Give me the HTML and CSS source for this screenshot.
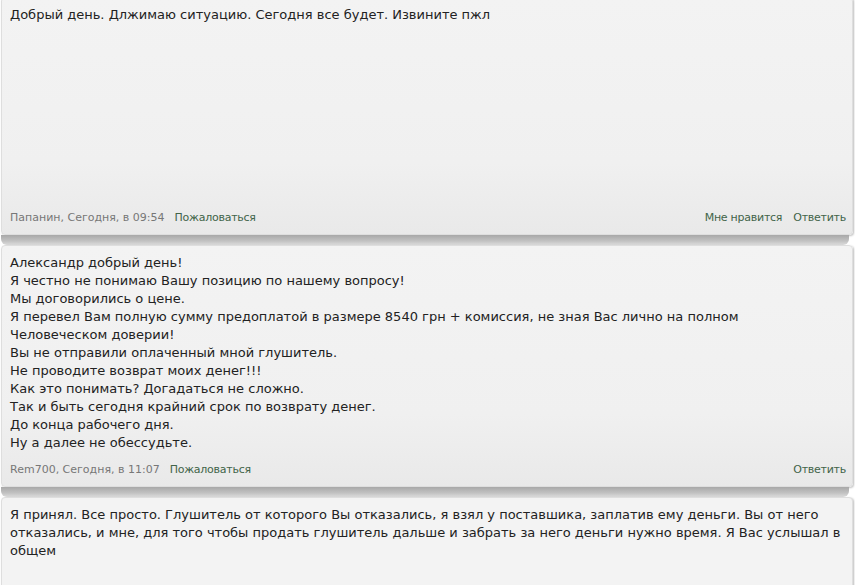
FILE: index.html
```html
<!DOCTYPE html>
<html lang="ru">
<head>
<meta charset="utf-8">
<link rel="stylesheet" href="styles.css">
</head>
<body>
<div class="thread">
  <div class="post post-first">
    <div class="msg msg-tall">Добрый день. Длжимаю ситуацию. Сегодня все будет. Извините пжл</div>
    <div class="meta">
      <div class="info"><span class="author">Папанин, Сегодня, в 09:54</span><a class="link">Пожаловаться</a></div>
      <div class="actions"><a class="link">Мне нравится</a><a class="link">Ответить</a></div>
    </div>
  </div>
  <div class="sep"></div>
  <div class="post">
    <div class="msg">Александр добрый день!<br>Я честно не понимаю Вашу позицию по нашему вопросу!<br>Мы договорились о цене.<br>Я перевел Вам полную сумму предоплатой в размере 8540 грн + комиссия, не зная Вас лично на полном<br>Человеческом доверии!<br>Вы не отправили оплаченный мной глушитель.<br>Не проводите возврат моих денег!!!<br>Как это понимать? Догадаться не сложно.<br>Так и быть сегодня крайний срок по возврату денег.<br>До конца рабочего дня.<br>Ну а далее не обессудьте.</div>
    <div class="meta">
      <div class="info"><span class="author">Rem700, Сегодня, в 11:07</span><a class="link">Пожаловаться</a></div>
      <div class="actions"><a class="link">Ответить</a></div>
    </div>
  </div>
  <div class="sep"></div>
  <div class="post post-last">
    <div class="msg">Я принял. Все просто. Глушитель от которого Вы отказались, я взял у поставшика, заплатив ему деньги. Вы от него отказались, и мне, для того чтобы продать глушитель дальше и забрать за него деньги нужно время. Я Вас услышал в общем</div>
  </div>
</div>
</body>
</html>
```
FILE: styles.css
```css
html, body {
  margin: 0;
  padding: 0;
  background: #ffffff;
  overflow: hidden;
}
body {
  width: 855px;
  height: 585px;
  font-family: Verdana, "DejaVu Sans", sans-serif;
}
.thread {
  display: flex;
  flex-direction: column;
  margin-top: -3px;
  padding: 0 2px 0 1px;
}
.post {
  background: linear-gradient(#f3f3f3, #f0f0f0 70%, #e9e9e9);
  border: 1px solid #dedede;
  border-radius: 4px;
  padding: 8px 4px 9px 8px;
  box-shadow: 1px 1px 2px rgba(0,0,0,0.25);
}
.post-last {
  padding-top: 8px;
  padding-bottom: 40px;
  background: #f3f3f3;
}
.msg {
  font-size: 13px;
  line-height: 18px;
  color: #222;
}
.msg-tall {
  min-height: 194px;
}
.meta {
  display: flex;
  justify-content: space-between;
  align-items: center;
  margin-top: 11px;
  padding-right: 2px;
  font-size: 11px;
  line-height: 14px;
}
.info, .actions {
  display: flex;
  gap: 10px;
}
.actions {
  gap: 11px;
}
.author {
  color: #777;
}
.link {
  color: #426449;
  letter-spacing: -0.25px;
}
.sep {
  height: 10px;
  margin: 0 4px 0 0;
  background: linear-gradient(#a8a8a8, #c2c2c2 60%, #dcdcdc);
  border-radius: 0 0 6px 6px;
}
```
